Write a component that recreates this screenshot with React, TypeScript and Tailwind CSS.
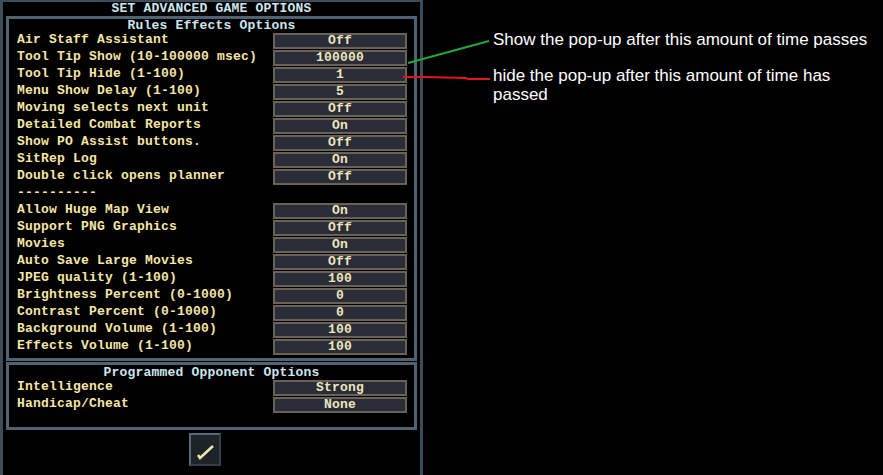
import React from "react";

type Row = { label: string; value?: string };

const RULES: Row[] = [
  { label: "Air Staff Assistant", value: "Off" },
  { label: "Tool Tip Show (10-100000 msec)", value: "100000" },
  { label: "Tool Tip Hide (1-100)", value: "1" },
  { label: "Menu Show Delay (1-100)", value: "5" },
  { label: "Moving selects next unit", value: "Off" },
  { label: "Detailed Combat Reports", value: "On" },
  { label: "Show PO Assist buttons.", value: "Off" },
  { label: "SitRep Log", value: "On" },
  { label: "Double click opens planner", value: "Off" },
  { label: "----------" },
  { label: "Allow Huge Map View", value: "On" },
  { label: "Support PNG Graphics", value: "Off" },
  { label: "Movies", value: "On" },
  { label: "Auto Save Large Movies", value: "Off" },
  { label: "JPEG quality (1-100)", value: "100" },
  { label: "Brightness Percent (0-1000)", value: "0" },
  { label: "Contrast Percent (0-1000)", value: "0" },
  { label: "Background Volume (1-100)", value: "100" },
  { label: "Effects Volume (1-100)", value: "100" },
];

const OPPONENT: Row[] = [
  { label: "Intelligence", value: "Strong" },
  { label: "Handicap/Cheat", value: "None" },
];

function OptionRow({ label, value }: Row) {
  return (
    <div className="flex h-[17px] items-start pl-[8px] pr-[7px]">
      <span className="flex-1 whitespace-pre leading-[14px] text-[#f6e7a6]">{label}</span>
      {value !== undefined && (
        <div className="flex h-[16px] w-[134px] items-center justify-center border-2 border-[#6a6256] bg-[#2a2d37]">
          <span className="leading-[12px] text-[#efe6bf]">{value}</span>
        </div>
      )}
    </div>
  );
}

export default function App() {
  return (
    <div className="relative flex h-[475px] w-[883px] overflow-hidden bg-black font-['Liberation_Mono',monospace] text-[13px] font-bold tracking-[0.2px]">
      {/* dialog frame */}
      <div className="flex h-full w-[423px] flex-col border-x-[3px] border-t-2 border-[#3d4c59] px-[3px]">
        <div className="flex h-[14px] items-center justify-center text-[#cfe6ee]">SET ADVANCED GAME OPTIONS</div>

        <div className="flex flex-col border-[3px] border-[#4f6372] pb-[2px]">
          <div className="flex h-[14px] items-center justify-center text-[#cfe6ee]">Rules Effects Options</div>
          {RULES.map((r, i) => (
            <OptionRow key={i} {...r} />
          ))}
        </div>

        <div className="mt-px flex flex-col border-[3px] border-[#4f6372] pb-[13px]">
          <div className="flex h-[15px] items-center justify-center text-[#cfe6ee]">Programmed Opponent Options</div>
          {OPPONENT.map((r, i) => (
            <OptionRow key={i} {...r} />
          ))}
        </div>

        <button className="ml-[183px] mt-[3px] flex h-[33px] w-[32px] items-center justify-center border-2 border-t-[#56697a] border-l-[#56697a] border-r-[#34414c] border-b-[#34414c] bg-[#1d2327]">
          <svg width="22" height="22" viewBox="0 0 22 22">
            <polyline points="4,16 6,19 19,7" fill="none" stroke="#ebe6ad" strokeWidth="2.5" strokeLinejoin="miter" />
          </svg>
        </button>
      </div>

      {/* callouts */}
      <div className="ml-[70px] flex w-[385px] flex-col pt-[30px] font-['Liberation_Sans',Arial,sans-serif] text-[17px] font-normal leading-[20px] tracking-normal text-white">
        <p>Show the pop-up after this amount of time passes</p>
        <p className="mt-[16px] leading-[19px]">hide the pop-up after this amount of time has passed</p>
      </div>

      <svg className="pointer-events-none absolute left-0 top-0" width="883" height="475">
        <line x1="408" y1="63" x2="489" y2="41" stroke="#1fa83c" strokeWidth="2" />
        <polyline points="403,77 425,77 466,78 468,79 490,79" fill="none" stroke="#e41515" strokeWidth="2" />
      </svg>
    </div>
  );
}
